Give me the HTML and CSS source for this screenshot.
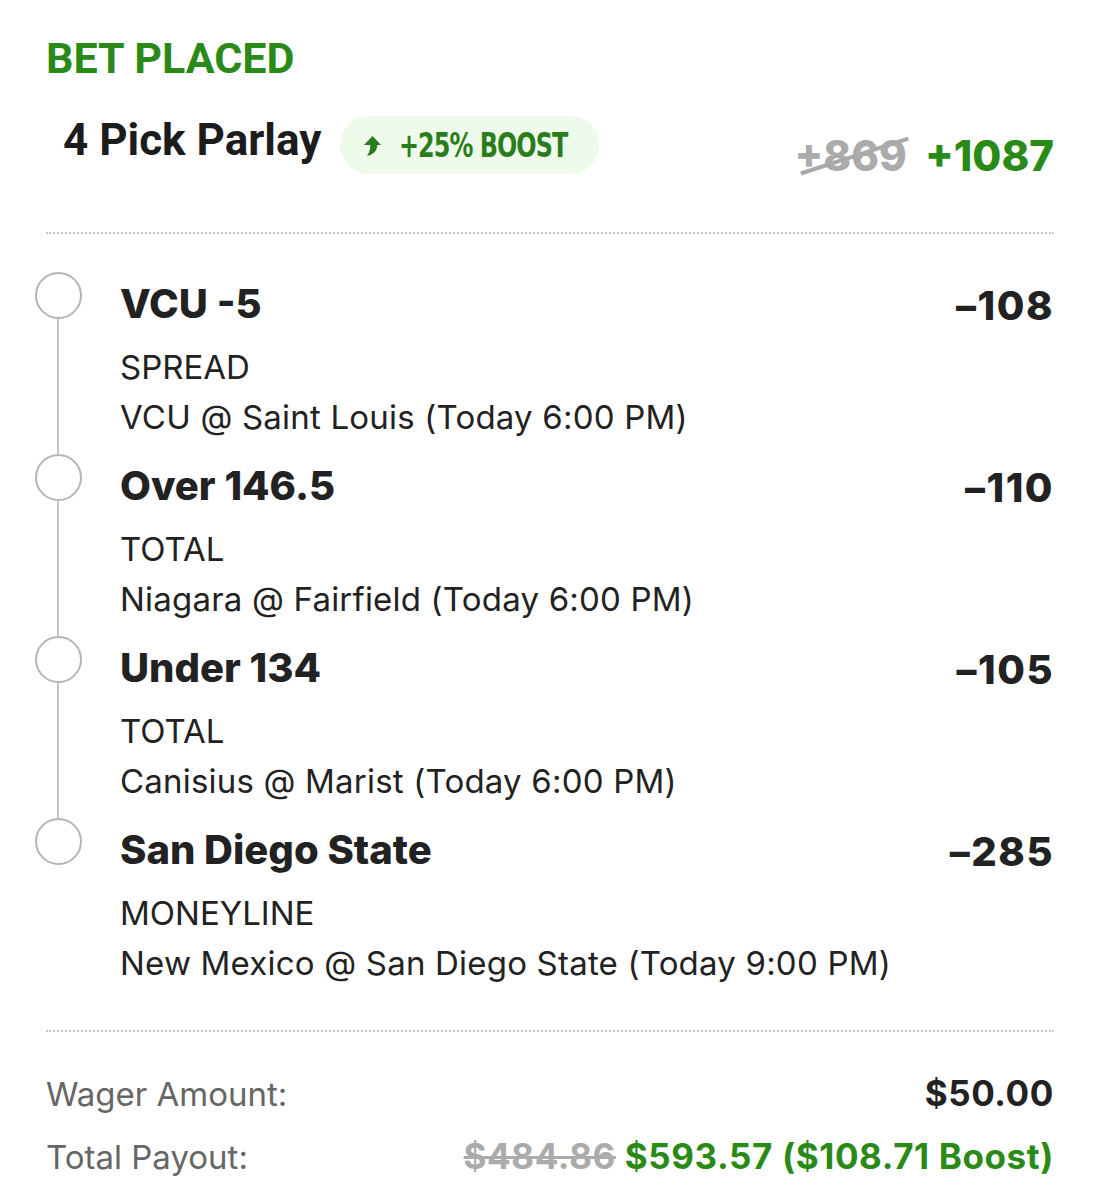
FILE: index.html
```html
<!DOCTYPE html>
<html lang="en">
<head>
    <meta charset="UTF-8">
    <meta name="viewport" content="width=device-width, initial-scale=1.0">
    <title>Bet Placed</title>
    <link rel="stylesheet" href="styles.css">
</head>
<body>

<div id="boleto">
    <h1 id="status">BET PLACED</h1>

    <div id="cabecalho">
        <h2 id="parlay">4 Pick Parlay</h2>
        <span id="boost">
            <svg class="seta" width="17" height="20" viewBox="0 0 17 20">
                <path d="M8.5 0 L17 9 L13.2 9 C13.2 14 10.5 18 3 20 C5.6 16.2 6.3 13 6.3 9 L0 9 Z" fill="#2a7d1c"/>
            </svg>
            <span class="boost-texto">+25% BOOST</span>
        </span>
        <div id="odds-total">
            <span class="odds-antiga">+869</span>
            <span class="odds-nova">+1087</span>
        </div>
    </div>

    <div class="divisor"></div>

    <ul id="selecoes">
        <li class="selecao">
            <div class="marcador"><span class="bolinha"></span><span class="linha"></span></div>
            <div class="info">
                <div class="escolha">VCU -5</div>
                <div class="mercado">SPREAD</div>
                <div class="jogo">VCU @ Saint Louis (Today 6:00 PM)</div>
            </div>
            <div class="cotacao">&ndash;108</div>
        </li>
        <li class="selecao">
            <div class="marcador"><span class="bolinha"></span><span class="linha"></span></div>
            <div class="info">
                <div class="escolha">Over 146.5</div>
                <div class="mercado">TOTAL</div>
                <div class="jogo">Niagara @ Fairfield (Today 6:00 PM)</div>
            </div>
            <div class="cotacao">&ndash;110</div>
        </li>
        <li class="selecao">
            <div class="marcador"><span class="bolinha"></span><span class="linha"></span></div>
            <div class="info">
                <div class="escolha">Under 134</div>
                <div class="mercado">TOTAL</div>
                <div class="jogo">Canisius @ Marist (Today 6:00 PM)</div>
            </div>
            <div class="cotacao">&ndash;105</div>
        </li>
        <li class="selecao ultima">
            <div class="marcador"><span class="bolinha"></span></div>
            <div class="info">
                <div class="escolha">San Diego State</div>
                <div class="mercado">MONEYLINE</div>
                <div class="jogo">New Mexico @ San Diego State (Today 9:00 PM)</div>
            </div>
            <div class="cotacao">&ndash;285</div>
        </li>
    </ul>

    <div class="divisor"></div>

    <div class="resumo">
        <span class="rotulo">Wager Amount:</span>
        <span class="valor">$50.00</span>
    </div>
    <div class="resumo">
        <span class="rotulo">Total Payout:</span>
        <span class="valor"><s class="valor-antigo">$484.86</s> <span class="valor-novo">$593.57 ($108.71 Boost)</span></span>
    </div>
</div>

</body>
</html>
```

FILE: styles.css
```css
* {
    box-sizing: border-box;
}

body {
    margin: 0;
    background-color: #fff;
    font-family: 'Inter', 'Noto Sans', sans-serif;
    color: #222;
}

#boleto {
    padding: 36px 45px 0 46px;
}

#status {
    margin: 0;
    font-family: 'Roboto', sans-serif;
    font-weight: 700;
    font-size: 43px;
    line-height: 44px;
    color: #2a8a17;
}

#cabecalho {
    display: flex;
    align-items: flex-start;
    margin-top: 34px;
    height: 118px;
}

#parlay {
    margin: 0 0 0 17px;
    font-family: 'Roboto', sans-serif;
    font-weight: 700;
    font-size: 44px;
    line-height: 52px;
    color: #1c1c1c;
}

#boost {
    display: flex;
    align-items: center;
    margin-left: 19px;
    margin-top: 2px;
    height: 58px;
    padding: 0 31px 0 24px;
    border-radius: 29px;
    background-color: #eefaea;
    color: #2a7d1c;
}

#boost .seta {
    margin-right: 18px;
    margin-top: 2px;
}

.boost-texto {
    display: inline-block;
    font-family: 'DejaVu Sans Condensed', 'DejaVu Sans', sans-serif;
    font-weight: 700;
    font-size: 34px;
    letter-spacing: -1.2px;
    transform: scaleX(0.78);
    transform-origin: left center;
    margin-right: -47px;
}

#odds-total {
    margin-left: auto;
    margin-top: 20px;
    font-weight: 800;
    font-size: 42px;
    line-height: 44px;
}

.odds-antiga {
    position: relative;
    color: #ababab;
    margin-right: 9px;
}

.odds-antiga::after {
    content: '';
    position: absolute;
    left: 3px;
    right: -4px;
    top: 48%;
    height: 4px;
    background-color: #a9a9a9;
    transform: rotate(-18deg);
}

.odds-nova {
    color: #2a8a17;
}

.divisor {
    height: 0;
    border-top: 2px dotted #c6c6c6;
}

#selecoes {
    list-style: none;
    margin: 38px 0 0 -11px;
    padding: 0;
}

.selecao {
    display: grid;
    grid-template-columns: 46px 1fr auto;
    column-gap: 39px;
    height: 182px;
}

.selecao.ultima {
    height: 212px;
}

.marcador {
    display: flex;
    flex-direction: column;
    align-items: center;
}

.bolinha {
    width: 47px;
    height: 47px;
    border: 2px solid #b5b5b5;
    border-radius: 50%;
    flex-shrink: 0;
}

.linha {
    flex-grow: 1;
    width: 2px;
    background-color: #c4c4c4;
}

.info {
    padding-top: 8px;
}

.escolha {
    font-weight: 800;
    font-size: 40px;
    line-height: 48px;
}

.mercado {
    margin-top: 15px;
    font-size: 33px;
    line-height: 48px;
}

.jogo {
    margin-top: 2px;
    font-size: 33px;
    line-height: 48px;
    letter-spacing: 0.2px;
}

.cotacao {
    padding-top: 10px;
    font-weight: 800;
    font-size: 40px;
    line-height: 48px;
    letter-spacing: 1.5px;
    text-align: right;
}

.resumo {
    display: flex;
    justify-content: space-between;
    align-items: baseline;
    font-size: 33px;
    line-height: 62px;
}

.divisor + .resumo {
    margin-top: 30px;
}

.rotulo {
    color: #666;
}

.valor {
    font-weight: 700;
    font-size: 35px;
    letter-spacing: 0.6px;
    color: #222;
}

.valor-antigo {
    color: #ababab;
    text-decoration-thickness: 3px;
}

.valor-novo {
    color: #2a8a17;
}
```
